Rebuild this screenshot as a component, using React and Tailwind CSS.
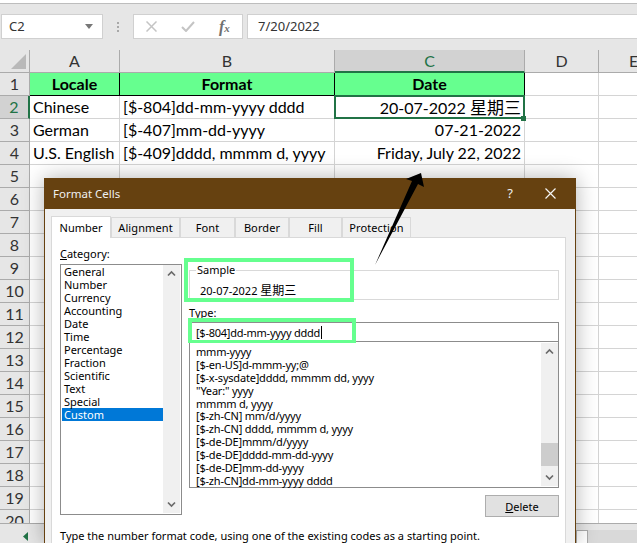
import React from "react";

const rows = [
  ["Locale", "Format", "Date"],
  ["Chinese", "[$-804]dd-mm-yyyy dddd", "20-07-2022 星期三"],
  ["German", "[$-407]mm-dd-yyyy", "07-21-2022"],
  ["U.S. English", "[$-409]dddd, mmmm d, yyyy", "Friday, July 22, 2022"],
];
const categories = ["General","Number","Currency","Accounting","Date","Time","Percentage","Fraction","Scientific","Text","Special","Custom"];
const types = ["mmm-yyyy","[$-en-US]d-mmm-yy;@","[$-x-sysdate]dddd, mmmm dd, yyyy","\"Year:\" yyyy","mmmm d, yyyy","[$-zh-CN] mm/d/yyyy","[$-zh-CN] dddd, mmmm d, yyyy","[$-de-DE]mmm/d/yyyy","[$-de-DE]dddd-mm-dd-yyyy","[$-de-DE]mm-dd-yyyy","[$-zh-CN]dd-mm-yyyy dddd"];
const tabs = [["Number",60],["Alignment",69],["Font",55],["Border",54],["Fill",53],["Protection",69]];
const cols = ["A","B","C","D","E"];

function Chevron({ down }) {
  return (
    <svg width="9" height="7" viewBox="0 0 9 7">
      <path d={down ? "M1 1.5 L4.5 5 L8 1.5" : "M1 5.5 L4.5 2 L8 5.5"} fill="none" stroke="#6a6a6a" strokeWidth="1.7" />
    </svg>
  );
}

function Toolbar() {
  return (
    <div className="flex h-[46px] shrink-0 items-start bg-[#e6e6e6] pt-[10px]">
      <div className="flex h-[25px] w-[102px] ml-[1px] items-center justify-between border border-[#d0d0d0] bg-white pl-[7px] pr-[8px] text-[13px] text-[#333]">
        C2
        <svg width="9" height="5" viewBox="0 0 9 5"><path d="M0 0H8L4 5Z" fill="#777" /></svg>
      </div>
      <div className="flex h-[25px] w-[30px] flex-col items-center justify-center gap-[2px]">
        <span className="size-[2px] bg-[#a8a8a8]" />
        <span className="size-[2px] bg-[#a8a8a8]" />
        <span className="size-[2px] bg-[#a8a8a8]" />
      </div>
      <div className="flex h-[25px] w-[110px] items-center border border-[#d0d0d0] bg-white">
        <svg className="ml-[12px]" width="11" height="11" viewBox="0 0 11 11"><path d="M0.5 0.5L10.5 10.5M10.5 0.5L0.5 10.5" stroke="#c4c4c4" strokeWidth="1.5" /></svg>
        <svg className="ml-[24px]" width="14" height="11" viewBox="0 0 14 11"><path d="M1 6L5 10L13 1" fill="none" stroke="#c4c4c4" strokeWidth="2" /></svg>
        <span className="ml-[24px] font-['Liberation_Serif'] text-[16px] font-bold italic leading-none text-[#707070]">f<span className="text-[11px]">x</span></span>
      </div>
      <div className="ml-[4px] flex h-[25px] flex-1 items-center border-y border-l border-[#d0d0d0] bg-white pl-[10px] text-[13px] text-[#333]">7/20/2022</div>
    </div>
  );
}

function DateText({ text }) {
  const m = text.match(/^(.*?)(星期三)$/);
  if (!m) return text;
  return <>{m[1]}<span className="text-[17px] leading-none">{m[2]}</span></>;
}

function Sheet() {
  const rowNums = Array.from({ length: 20 }, (_, i) => i + 1);
  return (
    <div className="h-[473px] shrink-0 overflow-hidden bg-white font-['Lato',sans-serif] text-[16px] leading-none text-black">
      <div className="grid h-[23px] grid-cols-[30px_90px_215px_190px_74px_70px] grid-rows-[23px] text-[#333]">
        <div className="relative border-r border-b border-[#ababab] bg-[#e6e6e6]">
          <svg className="absolute left-[11px] top-[4px]" width="16" height="16" viewBox="0 0 16 16"><path d="M15 0V15H0Z" fill="#b9b9b9" /></svg>
        </div>
        {cols.map((c) => (
          <div key={c} className={`flex items-center justify-center border-r border-[#ababab] ${c === "C" ? "border-b-2 border-b-[#217346] bg-[#d2d2d2] text-[#217346]" : "border-b bg-[#e6e6e6]"}`}>{c}</div>
        ))}
      </div>
      {rowNums.map((n) => {
        const r = rows[n - 1] || ["", "", ""];
        const head = n === 1;
        return (
          <div key={n} className="grid h-[23px] grid-cols-[30px_90px_215px_190px_74px_70px] grid-rows-[23px]">
            <div className={`flex items-center justify-center border-b text-[#333] ${n === 2 ? "border-r-2 border-r-[#217346] border-b-[#ababab] bg-[#d2d2d2] text-[#217346]" : "border-r border-[#ababab] bg-[#e6e6e6]"}`}>{n}</div>
            {r.map((t, i) => (
              <div key={i} className={`flex items-center overflow-visible whitespace-nowrap border-b border-r ${head ? "justify-center border-black bg-[#66ff8f] font-bold" : "border-[#d4d4d4]"} ${!head && i === 2 ? "justify-end pr-[3px] font-['Lato','Noto_Sans_CJK_SC',sans-serif]" : ""} ${!head && i < 2 ? "pl-[3px]" : ""}`}><span className="whitespace-pre"><DateText text={t} /></span></div>
            ))}
            <div className="border-r border-b border-[#d4d4d4]" />
            <div className="border-b border-[#d4d4d4]" />
          </div>
        );
      })}
    </div>
  );
}

function Dialog() {
  return (
    <div className="absolute left-[44px] top-[178px] flex h-[365px] w-[532px] flex-col border-x border-[#664110] bg-[#f0f0f0] font-['Noto_Sans',sans-serif] text-[11px] leading-[13px] text-black shadow-[0_0_20px_rgba(0,0,0,0.3)]">
      <div className="flex h-[31px] shrink-0 items-center justify-between bg-[#664110] pl-[8px] pr-[19px] text-[11.5px] text-[#f0f0f0]">
        <span>Format Cells</span>
        <div className="flex items-center gap-[32px]">
          <span className="text-[13px]">?</span>
          <svg width="11" height="11" viewBox="0 0 11 11"><path d="M0.5 0.5L10.5 10.5M10.5 0.5L0.5 10.5" stroke="#f5f5f5" strokeWidth="1.2" /></svg>
        </div>
      </div>
      <div className="ml-[6px] mt-[8px] flex h-[20px] items-end">
        {tabs.map(([t, w], i) => (
          <div key={t} style={{ width: w }} className={`flex items-center justify-center border border-b-0 border-[#d9d9d9] ${i === 0 ? "relative z-10 -mb-[1px] h-[22px] bg-white" : "h-[20px] bg-[#f0f0f0] tracking-[0.1px]"}`}>{t}</div>
        ))}
      </div>
      <div className="ml-[6px] mr-[9px] flex-1 overflow-hidden border border-b-0 border-[#d9d9d9] bg-white pl-[8px] pr-[6px]">
        <div className="flex">
          <div className="w-[122px] shrink-0">
            <div className="mt-[9px] h-[17px]"><u>C</u>ategory:</div>
            <div className="flex h-[251px] border border-[#8c8c8c] bg-white pb-[1px] pl-[1px] pr-[1px]">
              <div className="flex-1">
                {categories.map((c) => (
                  <div key={c} className={`pl-[2px] h-[13px] ${c === "Custom" ? "bg-[#0078d7] text-white" : ""}`}>{c}</div>
                ))}
              </div>
              <div className="flex w-[17px] flex-col items-center justify-between bg-[#f0f0f0] py-[5px]">
                <Chevron /><Chevron down />
              </div>
            </div>
          </div>
          <div className="ml-[7px] flex-1">
            <fieldset className="mt-[26px] h-[36px] border border-[#d9d9d9] pl-[5px]">
              <legend className="ml-[1px] px-[1px] leading-[12px]">Sample</legend>
              <div className="pl-[5px] pt-[8px] font-['Noto_Sans','Noto_Sans_CJK_SC',sans-serif]">20-07-2022 <span className="text-[12px]">星期三</span></div>
            </fieldset>
            <div className="mt-[6px] h-[16px] leading-[13px]">Type:</div>
            <div className="flex h-[20px] items-center border border-[#8c8c8c] pl-[6px] tracking-[-0.25px]">
              [$-804]dd-mm-yyyy dddd<span className="ml-[1px] h-[13px] w-px bg-black" />
            </div>
            <div className="flex h-[146px] border border-t-0 border-[#8c8c8c] bg-white">
              <div className="flex-1 pl-[6px] pt-[4px] tracking-[-0.2px]">
                {types.map((t) => <div key={t} className="h-[12.9px] whitespace-nowrap leading-[12.9px]">{t}</div>)}
              </div>
              <div className="my-[1px] flex w-[17px] flex-col items-center bg-[#f0f0f0] py-[5px]">
                <Chevron />
                <div className="mt-[88px] h-[23px] w-full bg-[#cdcdcd]" />
                <div className="mt-auto"><Chevron down /></div>
              </div>
            </div>
            <div className="mt-[7px] flex justify-end">
              <button className="h-[22px] w-[74px] border border-[#adadad] bg-[#e1e1e1] text-[11px]"><u>D</u>elete</button>
            </div>
          </div>
        </div>
        <div className="mt-[12px] whitespace-nowrap">Type the number format code, using one of the existing codes as a starting point.</div>
      </div>
      <div className="absolute left-[139px] top-[80px] h-[44px] w-[170px] border-[4px] border-[#66ff8f]" />
      <div className="absolute left-[143px] top-[140px] h-[25px] w-[168px] border-[4px] border-b-[3px] border-[#66ff8f]" />
    </div>
  );
}

export default function App() {
  return (
    <div className="relative flex h-[543px] w-[637px] flex-col overflow-hidden bg-white font-['Noto_Sans',sans-serif]">
      <div className="box-content h-[3px] shrink-0 border-b border-[#bdbdbd]" />
      <Toolbar />
      <Sheet />
      <div className="absolute bottom-0 left-0 flex h-[20px] w-full border-t border-[#ababab] bg-[#e6e6e6]">
        <svg className="ml-[23px] mt-[8px]" width="6" height="9" viewBox="0 0 6 9"><path d="M5 0V9L0 4.5Z" fill="#217346" /></svg>
        <div className="ml-auto mt-[6px] flex w-[61px]">
          <div className="h-[14px] w-[12px] border-x border-t border-[#ababab] bg-white" />
          <div className="h-[14px] flex-1 bg-[#d9d9d9]" />
        </div>
      </div>
      <div className="absolute left-[334px] top-[95px] h-[24px] w-[191px] border-2 border-[#217346]" />
      <div className="absolute left-[521px] top-[116px] size-[5px] bg-[#217346]" />
      <Dialog />
      <svg className="absolute left-[370px] top-[168px]" width="60" height="100" viewBox="0 0 60 100">
        <path d="M51 5 L54 19 L48 16 L5 97 L42 13 L36 11 Z" fill="#000" />
      </svg>
    </div>
  );
}
